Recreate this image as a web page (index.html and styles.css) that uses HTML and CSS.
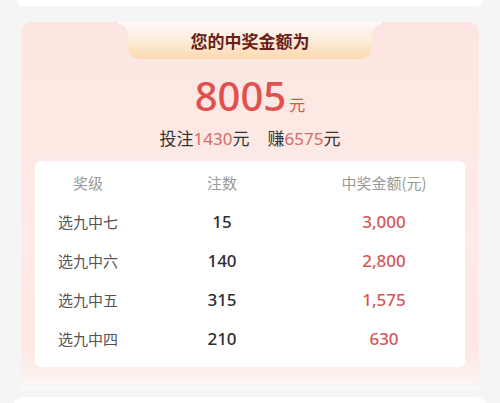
FILE: index.html
```html
<!DOCTYPE html>
<html lang="zh">
<head>
<meta charset="utf-8">
<link rel="stylesheet" href="styles.css">
</head>
<body>
<div class="top-card"></div>
<section class="prize">
  <div class="tab">您的中奖金额为</div>
  <div class="amount"><span class="amount-num">8005</span><span class="amount-unit">元</span></div>
  <div class="stats">
    <span class="stat">投注<em>1430</em>元</span>
    <span class="stat">赚<em>6575</em>元</span>
  </div>
  <div class="table">
    <div class="row head">
      <span class="c1">奖级</span><span class="c2">注数</span><span class="c3">中奖金额(元)</span>
    </div>
    <div class="row">
      <span class="c1">选九中七</span><span class="c2 num">15</span><span class="c3 money">3,000</span>
    </div>
    <div class="row">
      <span class="c1">选九中六</span><span class="c2 num">140</span><span class="c3 money">2,800</span>
    </div>
    <div class="row">
      <span class="c1">选九中五</span><span class="c2 num">315</span><span class="c3 money">1,575</span>
    </div>
    <div class="row">
      <span class="c1">选九中四</span><span class="c2 num">210</span><span class="c3 money">630</span>
    </div>
  </div>
</section>
<div class="bottom-card"></div>
</body>
</html>
```
FILE: styles.css
```css
* { box-sizing: border-box; }
html, body { margin: 0; padding: 0; }
body {
  width: 500px;
  height: 403px;
  overflow: hidden;
  background: #f5f5f5;
  font-family: "Noto Sans", "Noto Sans CJK SC", sans-serif;
}
.top-card {
  height: 6px;
  margin: 0 17px;
  background: #fff;
  border-radius: 0 0 10px 10px;
}
.prize {
  margin: 16px 21px 0;
  height: 368px;
  border-radius: 10px 10px 0 0;
  background: linear-gradient(to bottom, #fde6e1 0%, #fdebe7 60%, #fde8e3 88%, #fcefec 95%, #fafafa 100%);
  display: flex;
  flex-direction: column;
  align-items: center;
}
.tab {
  position: relative;
  width: 244px;
  height: 37px;
  padding-top: 2px;
  text-align: center;
  line-height: 34px;
  font-family: "Noto Sans CJK SC", sans-serif;
  font-size: 17px;
  font-weight: 700;
  color: #6b1e1c;
  background: linear-gradient(to bottom, #fff9f6 0%, #fdeedd 45%, #fcd9b0 100%);
  border-radius: 0 0 12px 12px;
}
.tab::before,
.tab::after {
  content: "";
  position: absolute;
  top: 0;
  width: 10px;
  height: 12px;
}
.tab::before {
  left: -10px;
  background: radial-gradient(circle at 0 100%, #fde6e1 9.5px, #fff9f6 10.5px);
}
.tab::after {
  right: -10px;
  background: radial-gradient(circle at 100% 100%, #fde6e1 9.5px, #fff9f6 10.5px);
}
.amount {
  margin-top: 15px;
  height: 44px;
  display: flex;
  align-items: baseline;
  color: #e2504e;
}
.amount-num {
  font-size: 40px;
  line-height: 44px;
  font-weight: 500;
}
.amount-unit {
  margin-left: 3px;
  font-family: "Noto Sans CJK SC", sans-serif;
  font-size: 16px;
}
.stats {
  margin-top: 8px;
  display: flex;
  gap: 18px;
  font-family: "Noto Sans CJK SC", sans-serif;
  font-size: 17px;
  line-height: 24px;
  color: #333;
}
.stat em {
  font-style: normal;
  font-family: "Noto Sans", sans-serif;
  color: #d66c6a;
}
.table {
  margin-top: 10px;
  align-self: stretch;
  margin-left: 14px;
  margin-right: 14px;
  padding: 2px 0 9px;
  background: #fff;
  border-radius: 6px;
}
.row {
  display: grid;
  grid-template-columns: 106px 162px 162px;
  height: 39px;
  align-items: center;
  text-align: center;
  font-family: "Noto Sans CJK SC", sans-serif;
  font-size: 15px;
  color: #555;
}
.row.head { color: #999; }
.num {
  font-family: "Noto Sans", sans-serif;
  font-size: 17px;
  font-weight: 500;
  color: #2e2e2e;
}
.money {
  font-family: "Noto Sans", sans-serif;
  font-size: 17px;
  font-weight: 500;
  color: #d3585a;
}
.bottom-card {
  margin: 7px 13px 0;
  height: 20px;
  background: #fff;
  border-radius: 10px 10px 0 0;
}
```
